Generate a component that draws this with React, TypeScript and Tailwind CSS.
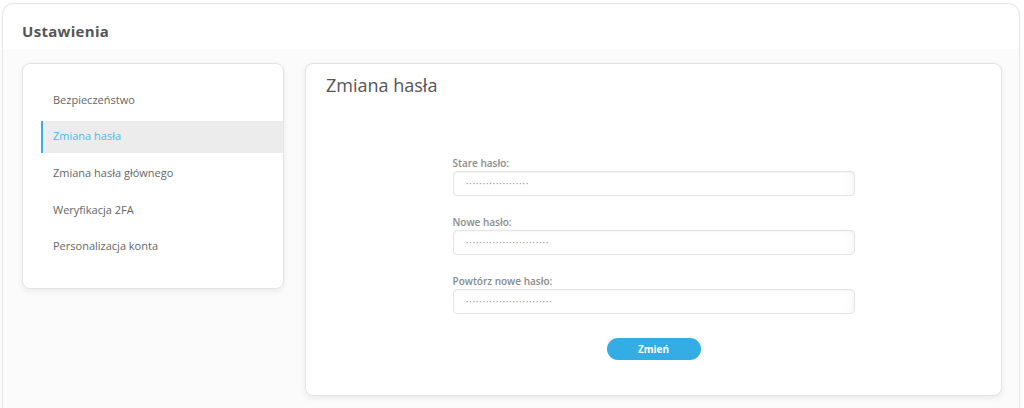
import React from "react";

const items = [
  "Bezpieczeństwo",
  "Zmiana hasła",
  "Zmiana hasła głównego",
  "Weryfikacja 2FA",
  "Personalizacja konta",
];

function Field({ label, dots }: { label: string; dots: number }) {
  return (
    <div className="flex flex-col">
      <label className="h-[14px] text-[10px] leading-[14px] font-semibold text-[#8a8a8a]">{label}</label>
      <input
        readOnly
        value={"·".repeat(dots)}
        className="mt-[1px] h-[25px] w-full rounded-[4px] border border-[#e4e4e4] bg-white pl-[12px] text-[10px] leading-[23px] text-[#888] shadow-[inset_-12px_0_14px_-12px_rgba(0,0,0,0.06),inset_0_1px_2px_rgba(0,0,0,0.04)] outline-none"
        style={{ fontFamily: "'Liberation Sans', sans-serif" }}
      />
    </div>
  );
}

export default function App() {
  return (
    <div className="flex h-[408px] w-[1024px] flex-col overflow-hidden bg-white pl-[2px] pr-[4px] pt-[3px]" style={{ fontFamily: "'Open Sans', sans-serif" }}>
      <div className="flex h-[440px] shrink-0 flex-col rounded-[12px] border border-[#e6e6e6] bg-white shadow-[0_1px_4px_rgba(0,0,0,0.05)]">
        <div className="h-[45px] pl-[19px] pt-[16px]">
          <h1 className="text-[15px] font-bold leading-[22px] tracking-[0.3px] text-[#555]">Ustawienia</h1>
        </div>
        <div className="flex flex-1 gap-[21px] rounded-b-[12px] bg-[#fbfbfb] pl-[19px] pr-[17px] pt-[14px]">
          <div className="h-[226px] w-[262px] shrink-0 rounded-[8px] border border-[#e4e4e4] bg-white pl-[18px] pt-[20px] shadow-[0_2px_6px_rgba(0,0,0,0.07)]">
            <ul className="flex flex-col gap-[4.6px]">
              {items.map((it, i) => {
                const active = i === 1;
                return (
                  <li
                    key={it}
                    className={
                      active
                        ? "flex h-[32px] items-center border-l-2 border-[#35aee4] bg-[#ececec] pl-[10px] text-[11px] text-[#4db8e9]"
                        : "flex h-[32px] items-center border-l-2 border-transparent pl-[10px] text-[11px] text-[#666]"
                    }
                  >
                    {it}
                  </li>
                );
              })}
            </ul>
          </div>
          <div className="h-[333px] flex-1 rounded-[8px] border border-[#e4e4e4] bg-white shadow-[0_2px_6px_rgba(0,0,0,0.07)]">
            <h2 className="pl-[20px] pt-[9px] text-[18px] leading-[24px] text-[#555]">Zmiana hasła</h2>
            <div className="mx-auto mt-[59px] flex w-[402px] flex-col gap-[19px]">
              <Field label="Stare hasło:" dots={19} />
              <Field label="Nowe hasło:" dots={25} />
              <Field label="Powtórz nowe hasło:" dots={26} />
              <div className="flex justify-center pt-[5px]">
                <button className="h-[22px] w-[94px] rounded-full bg-[#33ade4] text-[10px] font-bold text-white">Zmień</button>
              </div>
            </div>
          </div>
        </div>
      </div>
    </div>
  );
}
